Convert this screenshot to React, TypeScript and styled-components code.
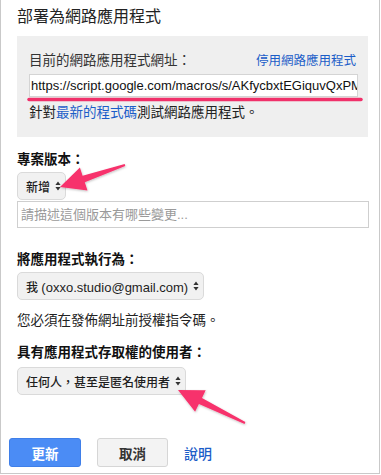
import React from "react";
import styled, { createGlobalStyle } from "styled-components";

const Global = createGlobalStyle`
  html, body { margin: 0; padding: 0; background: #fff; }
  body { font-family: "Liberation Sans", "Noto Sans CJK TC", sans-serif; color: #222; }
  * { box-sizing: border-box; }
`;

const FONT = `"Liberation Sans", "Noto Sans CJK TC", sans-serif`;

const Page = styled.div`
  position: relative;
  width: 380px;
  height: 474px;
  border: 1px solid #c9c9c9;
  border-top: none;
  padding: 0 11px 0 16px;
  display: flex;
  flex-direction: column;
  align-items: flex-start;
  font-family: ${FONT};
`;

const Title = styled.h1`
  margin: 7px 0 0;
  font-size: 16px;
  line-height: 20px;
  font-weight: 400;
  color: #222;
`;

const UrlPanel = styled.section`
  margin-top: 9px;
  width: 100%;
  background: #efefef;
  padding: 16px 10px 15px 12px;
  display: flex;
  flex-direction: column;
`;

const PanelRow = styled.div`
  display: flex;
  justify-content: space-between;
  align-items: center;
  font-size: 13.5px;
  line-height: 18px;
  color: #333;
`;

const Link = styled.a`
  color: #1b5dc8;
  text-decoration: none;
  font-size: inherit;
  cursor: pointer;
`;

const SmallLink = styled(Link)`
  font-size: 12.5px;
  margin-right: 2px;
`;

const UrlField = styled.div`
  margin-top: 4px;
  height: 23px;
  width: 100%;
  background: #fff;
  border: 1px solid #d4d4d4;
  font-size: 13px;
  line-height: 21px;
  padding-left: 1px;
  color: #111;
  white-space: nowrap;
  overflow: hidden;
`;

const Hint = styled.p<{ $top: number }>`
  margin: ${(p) => p.$top}px 0 0;
  font-size: 13.5px;
  line-height: 18px;
  color: #222;
`;

const Label = styled.h2<{ $top: number }>`
  margin: ${(p) => p.$top}px 0 0;
  font-size: 13.5px;
  line-height: 18px;
  font-weight: 700;
  color: #111;
`;

const Select = styled.button<{ $top: number }>`
  margin-top: ${(p) => p.$top}px;
  height: 28px;
  padding: 0 4px 0 8px;
  display: inline-flex;
  align-items: center;
  gap: 5px;
  background: #f1f1f1;
  border: 1px solid #dadada;
  border-radius: 5px;
  font-family: ${FONT};
  font-size: 12px;
  font-weight: 500;
  color: #1e1e1e;
`;

const SelectText = styled.span`
  white-space: nowrap;
`;

const SelectLatin = styled.span`
  font-size: 13px;
`;

const Describe = styled.div`
  margin-top: 1px;
  width: calc(100% + 1px);
  height: 27px;
  border: 1px solid #cfcfcf;
  background: #fff;
  padding-left: 3px;
  font-size: 13px;
  line-height: 25px;
  color: #9a9a9a;
`;

const Actions = styled.div`
  margin: 43px 0 0 -8px;
  display: flex;
  align-items: center;
  gap: 16px;
`;

const Btn = styled.button<{ $primary?: boolean }>`
  width: ${(p) => (p.$primary ? 72 : 71)}px;
  height: 29px;
  border-radius: 3px;
  font-family: ${FONT};
  font-size: 13.5px;
  font-weight: 700;
  color: ${(p) => (p.$primary ? "#fff" : "#333")};
  background: ${(p) => (p.$primary ? "#4b8cf5" : "#f3f3f3")};
  border: 1px solid ${(p) => (p.$primary ? "#3f7fe9" : "#d6d6d6")};
`;

const HelpLink = styled(Link)`
  font-size: 14px;
  font-weight: 500;
`;

const Overlay = styled.svg`
  position: absolute;
  left: -1px;
  top: 0;
  pointer-events: none;
`;

const Updown = () => (
  <svg width="6" height="10" viewBox="0 0 6 10">
    <path d="M3 0.5 L5.6 4 L0.4 4 Z M3 9.5 L5.6 6 L0.4 6 Z" fill="#333" />
  </svg>
);

export default function App() {
  return (
    <>
      <Global />
      <Page>
        <Title>部署為網路應用程式</Title>
        <UrlPanel>
          <PanelRow>
            <span>目前的網路應用程式網址：</span>
            <SmallLink>停用網路應用程式</SmallLink>
          </PanelRow>
          <UrlField>https://script.google.com/macros/s/AKfycbxtEGiquvQxPMxVb</UrlField>
          <Hint $top={7}>
            針對<Link>最新的程式碼</Link>測試網路應用程式。
          </Hint>
        </UrlPanel>

        <Label $top={14}>專案版本：</Label>
        <Select $top={3}>
          <SelectText>新增</SelectText>
          <Updown />
        </Select>
        <Describe>請描述這個版本有哪些變更...</Describe>

        <Label $top={23}>將應用程式執行為：</Label>
        <Select $top={3}>
          <SelectText>
            我 <SelectLatin>(oxxo.studio@gmail.com)</SelectLatin>
          </SelectText>
          <Updown />
        </Select>
        <Hint $top={12}>您必須在發佈網址前授權指令碼。</Hint>

        <Label $top={14}>具有應用程式存取權的使用者：</Label>
        <Select $top={5}>
          <SelectText>任何人，甚至是匿名使用者</SelectText>
          <Updown />
        </Select>

        <Actions>
          <Btn $primary>更新</Btn>
          <Btn>取消</Btn>
          <HelpLink>說明</HelpLink>
        </Actions>

        <Overlay width="381" height="475" viewBox="0 0 381 475">
          <defs>
            <filter id="sh" x="-20%" y="-20%" width="140%" height="140%">
              <feDropShadow dx="0.5" dy="1" stdDeviation="0.8" floodColor="#000" floodOpacity="0.25" />
            </filter>
          </defs>
          <line x1="29" y1="99.5" x2="361" y2="99.5" stroke="#f0306a" strokeWidth="3.5" strokeLinecap="round" />
          <polygon
            filter="url(#sh)"
            fill="#f7336c"
            points="60,187 79.9,167.6 82.6,175.7 124.7,164 125.3,166 84.8,182.3 87.5,190.4"
          />
          <polygon
            filter="url(#sh)"
            fill="#f7336c"
            points="178,390 205.7,390.2 202,397.9 245.4,422.1 244.6,423.9 198.9,404.1 195.1,411.8"
          />
        </Overlay>
      </Page>
    </>
  );
}
